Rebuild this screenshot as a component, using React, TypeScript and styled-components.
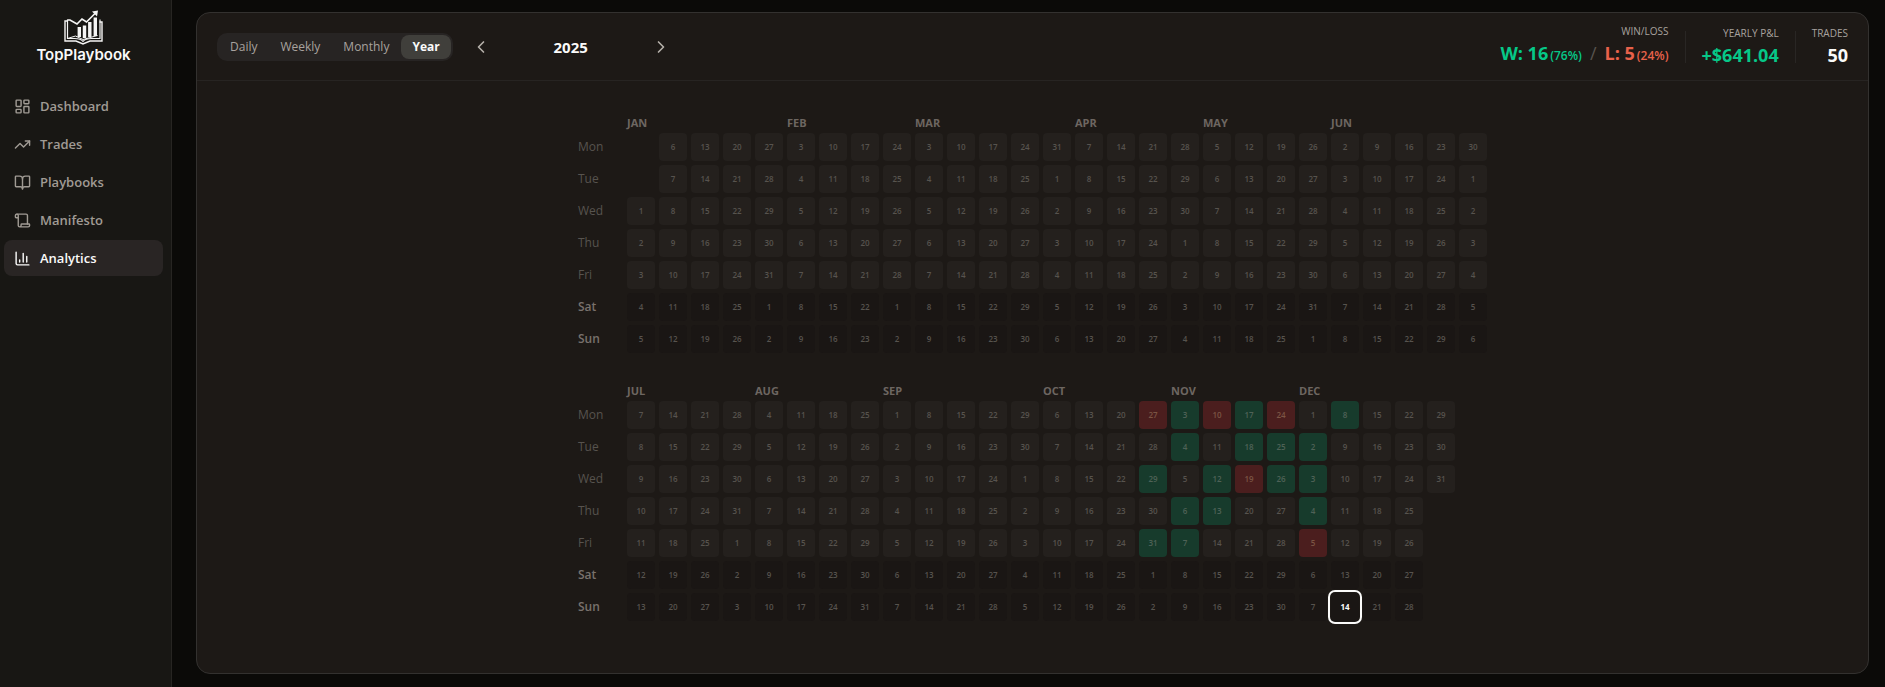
import React from "react";
import styled, { createGlobalStyle, css } from "styled-components";
import {
  BookOpen,
  ChartColumn,
  ChevronLeft,
  ChevronRight,
  LayoutDashboard,
  Scroll,
  TrendingUp,
} from "lucide-react";

const GlobalStyle = createGlobalStyle`
  *, *::before, *::after { box-sizing: border-box; }
  body {
    margin: 0;
    background: #0b0a08;
    color: #fafaf9;
    font-family: "Open Sans", "Noto Sans", sans-serif;
  }
  button { font: inherit; color: inherit; border: 0; background: none; padding: 0; cursor: pointer; }
`;

const Shell = styled.div`
  display: flex;
  min-height: 100vh;
`;

const Sidebar = styled.aside`
  flex: 0 0 172px;
  background: #181714;
  border-right: 1px solid #272522;
  padding: 10px 8px 0 4px;
`;

const Brand = styled.a`
  display: flex;
  flex-direction: column;
  align-items: center;
  height: 78px;
  color: #fafaf9;
  text-decoration: none;
`;

const BrandName = styled.span`
  font-family: Inter, sans-serif;
  font-size: 15px;
  font-weight: 600;
  line-height: 20px;
`;

const Nav = styled.nav`
  display: flex;
  flex-direction: column;
  gap: 2px;
`;

const NavLink = styled.a<{ $active?: boolean }>`
  display: flex;
  align-items: center;
  gap: 9px;
  height: 36px;
  padding: 0 10px;
  border-radius: 8px;
  font-size: 13px;
  font-weight: 600;
  text-decoration: none;
  color: ${(p) => (p.$active ? "#fafaf9" : "#a09b94")};
  background: ${(p) => (p.$active ? "#292524" : "transparent")};
`;

const Main = styled.main`
  flex: 1;
  min-width: 0;
  display: flex;
  padding: 12px 16px 13px 24px;
`;

const Card = styled.section`
  flex: 1;
  min-width: 0;
  background: #1d1916;
  border: 1px solid #33312f;
  border-radius: 14px;
`;

const Toolbar = styled.header`
  display: flex;
  align-items: center;
  justify-content: space-between;
  height: 68px;
  padding: 0 20px;
  border-bottom: 1px solid #272422;
`;

const Controls = styled.div`
  display: flex;
  align-items: center;
  gap: 16px;
`;

const Segments = styled.div`
  display: flex;
  gap: 1px;
  padding: 2px;
  border-radius: 10px;
  background: #272423;
`;

const Segment = styled.button<{ $active?: boolean }>`
  height: 24px;
  padding: 0 11px;
  border-radius: 8px;
  font-size: 12px;
  font-weight: ${(p) => (p.$active ? 700 : 500)};
  color: ${(p) => (p.$active ? "#fafaf9" : "#a8a29e")};
  background: ${(p) => (p.$active ? "#403f3b" : "transparent")};
`;

const Period = styled.div`
  display: flex;
  align-items: center;
`;

const Step = styled.button`
  display: grid;
  place-items: center;
  width: 24px;
  height: 24px;
  color: #b5b0aa;
`;

const PeriodLabel = styled.h1`
  width: 156px;
  margin: 0;
  font-size: 15px;
  font-weight: 700;
  line-height: 24px;
  text-align: center;
`;

const Stats = styled.div`
  display: flex;
  align-items: center;
  gap: 16px;
`;

const Divider = styled.span`
  width: 1px;
  height: 32px;
  background: #292624;
`;

const Stat = styled.dl`
  margin: 0;
  text-align: right;
`;

const StatName = styled.dt`
  font-size: 10px;
  line-height: 16px;
  text-transform: uppercase;
  color: #a8a29e;
`;

type Tone = "gain" | "loss" | "plain";
const tones: Record<Tone, string> = { gain: "#06c888", loss: "#e8614a", plain: "#fafaf9" };

const StatValue = styled.dd<{ $tone: Tone }>`
  margin: 0;
  font-size: 18px;
  font-weight: 700;
  line-height: 28px;
  color: ${(p) => tones[p.$tone]};
`;

const Tinted = styled.span<{ $tone: Tone }>`
  color: ${(p) => tones[p.$tone]};
`;

const Share = styled.small`
  margin-left: 2px;
  font-size: 12px;
  font-weight: 600;
`;

const Slash = styled.span`
  margin: 0 8px;
  font-weight: 400;
  color: #57534e;
`;

const Calendar = styled.div`
  display: flex;
  flex-direction: column;
  gap: 20px;
  width: max-content;
  margin: 0 auto;
  padding: 28px 0 40px;
`;

const HalfYear = styled.table`
  width: max-content;
  border-spacing: 4px;
`;

const Month = styled.th`
  height: 16px;
  padding: 0;
  font-size: 11px;
  font-weight: 700;
  line-height: 12px;
  text-align: left;
  vertical-align: bottom;
  color: #6d6661;
`;

const Corner = styled.td`
  width: 45px;
  padding: 0;
`;

const Weekday = styled.th<{ $weekend: boolean }>`
  padding: 0;
  font-size: 12px;
  font-weight: ${(p) => (p.$weekend ? 600 : 500)};
  line-height: 16px;
  text-align: left;
  color: ${(p) => (p.$weekend ? "#78716c" : "#57534e")};
`;

type Mark = "win" | "loss" | "weekend" | "none";
const fills: Record<Mark, string> = {
  win: "#173b2c",
  loss: "#4b1e1e",
  weekend: "#1a1614",
  none: "#24201d",
};

const Slot = styled.td`
  width: 28px;
  height: 28px;
  padding: 0;
`;

const Day = styled.button<{ $mark: Mark; $today: boolean }>`
  display: block;
  width: 28px;
  height: 28px;
  border-radius: 4px;
  font-size: 8px;
  font-weight: 600;
  line-height: 28px;
  text-align: center;
  color: ${(p) => (p.$mark === "loss" ? "#7b5544" : p.$mark === "win" ? "#4f6257" : "#57534e")};
  background: ${(p) => fills[p.$mark]};
  ${(p) =>
    p.$today &&
    css`
      color: #fafaf9;
      font-weight: 700;
      box-shadow: 0 0 0 1px #1d1916, 0 0 0 3px #fafaf9;
    `}
`;

const MONTHS = ["JAN", "FEB", "MAR", "APR", "MAY", "JUN", "JUL", "AUG", "SEP", "OCT", "NOV", "DEC"];
const WEEKDAYS = ["Mon", "Tue", "Wed", "Thu", "Fri", "Sat", "Sun"];
const YEAR = 2025;
const TODAY = "12-14";
const WINS = new Set([
  "10-29", "10-31", "11-3", "11-4", "11-6", "11-7", "11-12", "11-13",
  "11-17", "11-18", "11-25", "11-26", "12-2", "12-3", "12-4", "12-8",
]);
const LOSSES = new Set(["10-27", "11-10", "11-19", "11-24", "12-5"]);

const dayAt = (monday: Date, offset: number) =>
  new Date(monday.getFullYear(), monday.getMonth(), monday.getDate() + offset);

function monthSpans(first: Date, weeks: number) {
  const spans: { month: number; weeks: number }[] = [];
  for (let w = 0; w < weeks; w++) {
    const monday = dayAt(first, w * 7);
    const month = monday.getFullYear() < YEAR ? 0 : monday.getMonth();
    const last = spans[spans.length - 1];
    if (last && last.month === month) last.weeks++;
    else spans.push({ month, weeks: 1 });
  }
  return spans;
}

function Half({ first, weeks, label }: { first: Date; weeks: number; label: string }) {
  return (
    <HalfYear aria-label={label}>
      <thead>
        <tr>
          <Corner />
          {monthSpans(first, weeks).map((s) => (
            <Month key={s.month} scope="colgroup" colSpan={s.weeks}>
              {MONTHS[s.month]}
            </Month>
          ))}
        </tr>
      </thead>
      <tbody>
        {WEEKDAYS.map((name, d) => (
          <tr key={name}>
            <Weekday scope="row" $weekend={d > 4}>
              {name}
            </Weekday>
            {Array.from({ length: weeks }, (_, w) => {
              const date = dayAt(first, w * 7 + d);
              if (date.getFullYear() !== YEAR) return <Slot key={w} />;
              const id = `${date.getMonth() + 1}-${date.getDate()}`;
              const mark: Mark = WINS.has(id) ? "win" : LOSSES.has(id) ? "loss" : d > 4 ? "weekend" : "none";
              return (
                <Slot key={w}>
                  <Day $mark={mark} $today={id === TODAY}>
                    {date.getDate()}
                  </Day>
                </Slot>
              );
            })}
          </tr>
        ))}
      </tbody>
    </HalfYear>
  );
}

function Logo() {
  return (
    <svg width="39" height="35" viewBox="3.500 3.500 39 35" fill="none" stroke="#f5f5f4" aria-hidden="true">
      <path d="M7 14.500H4.500V34.500H15.500L22.500 37.500L29.500 34.500H41.500V15.500H39" strokeWidth="1.400" />
      <path d="M7 13V32H14C18 32 21 33 22.500 35C24 33 27 32 31 32H39.500V13" strokeWidth="1.200" />
      <path d="M7 32L15 29.500L22.500 33L37 29" strokeWidth="1" />
      <path d="M18.800 20.500V30.500M24 19V31.500M29.300 15.500V30.500M34.800 11V29.500" strokeWidth="3.400" />
      <path d="M7 13.500H9.500L16.500 17.500L21.500 12.500L26 15.500L34.500 7" strokeWidth="1.700" />
      <path d="M31.500 5L37.500 4L36.500 10Z" fill="#f5f5f4" stroke="none" />
    </svg>
  );
}

const LINKS = [
  { name: "Dashboard", Icon: LayoutDashboard },
  { name: "Trades", Icon: TrendingUp },
  { name: "Playbooks", Icon: BookOpen },
  { name: "Manifesto", Icon: Scroll },
  { name: "Analytics", Icon: ChartColumn },
];

export default function App() {
  return (
    <Shell>
      <GlobalStyle />
      <Sidebar>
        <Brand href="#">
          <Logo />
          <BrandName>TopPlaybook</BrandName>
        </Brand>
        <Nav>
          {LINKS.map(({ name, Icon }) => (
            <NavLink key={name} href="#" $active={name === "Analytics"}>
              <Icon size={17} />
              {name}
            </NavLink>
          ))}
        </Nav>
      </Sidebar>
      <Main>
        <Card>
          <Toolbar>
            <Controls>
              <Segments>
                {["Daily", "Weekly", "Monthly", "Year"].map((name) => (
                  <Segment key={name} $active={name === "Year"}>
                    {name}
                  </Segment>
                ))}
              </Segments>
              <Period>
                <Step aria-label="Previous year">
                  <ChevronLeft size={20} />
                </Step>
                <PeriodLabel>2025</PeriodLabel>
                <Step aria-label="Next year">
                  <ChevronRight size={20} />
                </Step>
              </Period>
            </Controls>
            <Stats>
              <Stat>
                <StatName>Win/Loss</StatName>
                <StatValue $tone="plain">
                  <Tinted $tone="gain">
                    W: 16<Share>(76%)</Share>
                  </Tinted>
                  <Slash>/</Slash>
                  <Tinted $tone="loss">
                    L: 5<Share>(24%)</Share>
                  </Tinted>
                </StatValue>
              </Stat>
              <Divider />
              <Stat>
                <StatName>Yearly P&amp;L</StatName>
                <StatValue $tone="gain">+$641.04</StatValue>
              </Stat>
              <Divider />
              <Stat>
                <StatName>Trades</StatName>
                <StatValue $tone="plain">50</StatValue>
              </Stat>
            </Stats>
          </Toolbar>
          <Calendar>
            <Half label="January to June 2025" first={new Date(YEAR - 1, 11, 30)} weeks={27} />
            <Half label="July to December 2025" first={new Date(YEAR, 6, 7)} weeks={26} />
          </Calendar>
        </Card>
      </Main>
    </Shell>
  );
}
